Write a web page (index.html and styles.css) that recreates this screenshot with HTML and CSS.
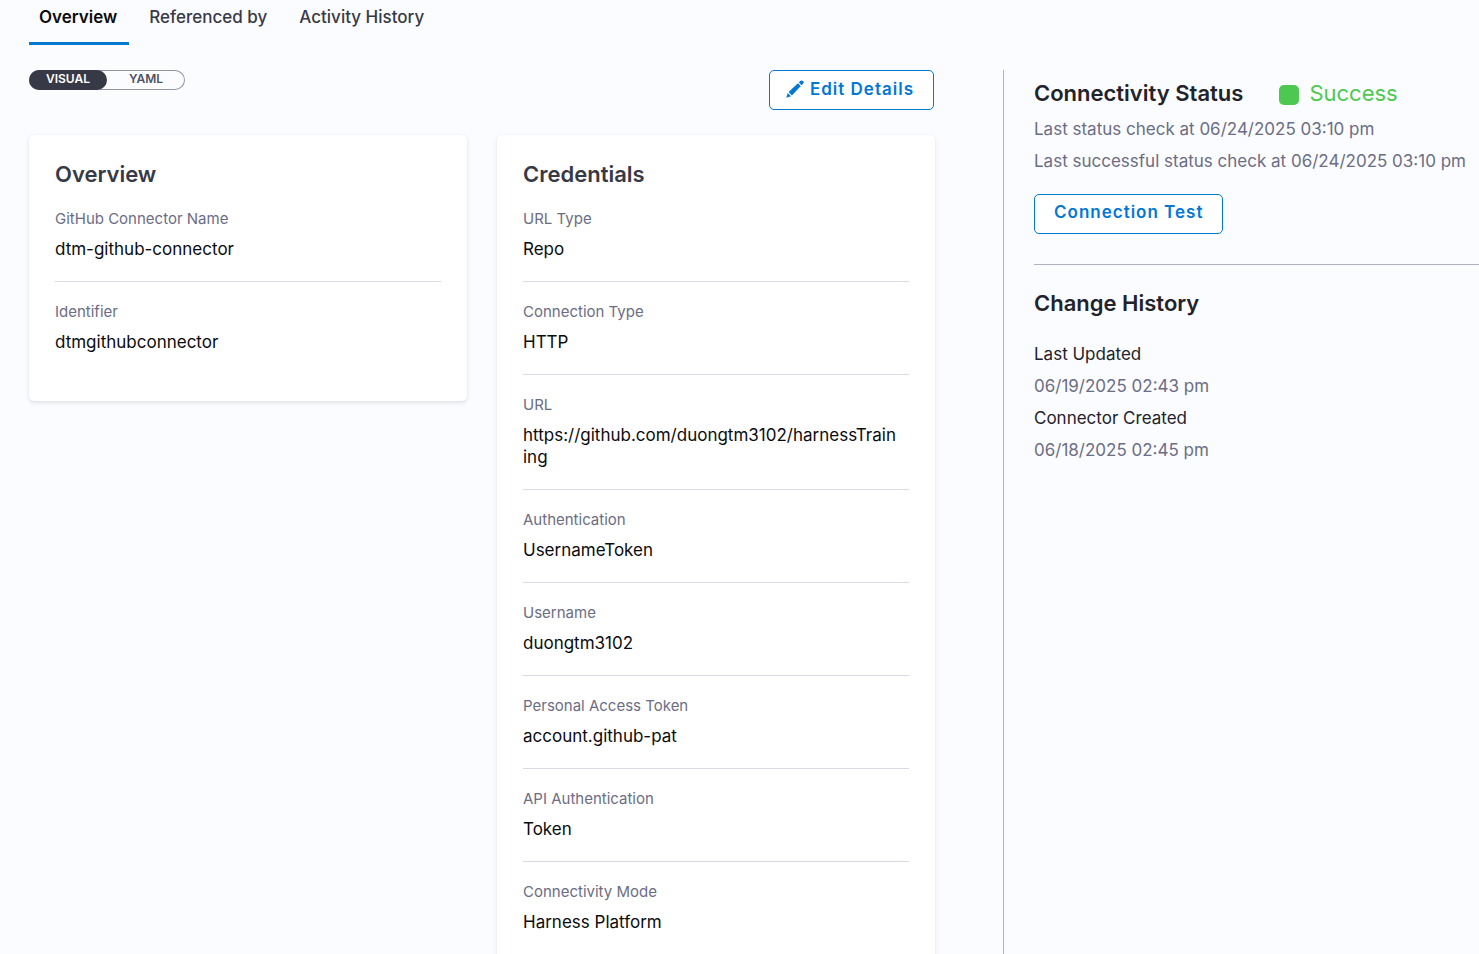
FILE: index.html
```html
<!DOCTYPE html>
<html lang="en">
<head>
<meta charset="utf-8">
<meta name="viewport" content="width=device-width, initial-scale=1">
<title>dtm-github-connector</title>
<link rel="stylesheet" href="styles.css">
</head>
<body>
<nav class="tabs">
  <a class="tab tab-active" href="#overview">Overview</a>
  <a class="tab" href="#references">Referenced by</a>
  <a class="tab" href="#activity">Activity History</a>
</nav>
<div class="page">
  <main class="main">
    <div class="toolbar">
      <div class="toggle">
        <button class="toggle-option toggle-on" type="button">VISUAL</button>
        <button class="toggle-option" type="button">YAML</button>
      </div>
      <button class="button" type="button">
        <svg class="pencil" viewBox="0 0 18 18" aria-hidden="true"><path d="M0.3 17.7 1.7 13 5 16.3zM2.6 12.1 11.9 3.2 14.8 6.1 5.9 15.4zM12.8 2.4 14.2 1Q15.6-.1 17 1T17 3.8L15.6 5.2z"/></svg>
        <span>Edit Details</span>
      </button>
    </div>
    <div class="cards">
      <section class="card">
        <h2 class="card-title">Overview</h2>
        <dl class="fields">
          <div class="field"><dt>GitHub Connector Name</dt><dd>dtm-github-connector</dd></div>
          <div class="field"><dt>Identifier</dt><dd>dtmgithubconnector</dd></div>
        </dl>
      </section>
      <section class="card">
        <h2 class="card-title">Credentials</h2>
        <dl class="fields">
          <div class="field"><dt>URL Type</dt><dd>Repo</dd></div>
          <div class="field"><dt>Connection Type</dt><dd>HTTP</dd></div>
          <div class="field"><dt>URL</dt><dd>https://github.com/duongtm3102/harnessTrain<wbr>ing</dd></div>
          <div class="field"><dt>Authentication</dt><dd>UsernameToken</dd></div>
          <div class="field"><dt>Username</dt><dd>duongtm3102</dd></div>
          <div class="field"><dt>Personal Access Token</dt><dd>account.github-pat</dd></div>
          <div class="field"><dt>API Authentication</dt><dd>Token</dd></div>
          <div class="field"><dt>Connectivity Mode</dt><dd>Harness Platform</dd></div>
        </dl>
      </section>
    </div>
  </main>
  <aside class="side">
    <section class="status">
      <div class="status-head">
        <h2 class="side-title">Connectivity Status</h2>
        <span class="status-value"><i class="status-dot"></i>Success</span>
      </div>
      <p class="muted">Last status check at 06/24/2025 03:10 pm</p>
      <p class="muted">Last successful status check at 06/24/2025 03:10 pm</p>
      <button class="button test-button" type="button">Connection Test</button>
    </section>
    <section class="history">
      <h2 class="side-title">Change History</h2>
      <dl class="changes">
        <dt>Last Updated</dt><dd class="muted">06/19/2025 02:43 pm</dd>
        <dt>Connector Created</dt><dd class="muted">06/18/2025 02:45 pm</dd>
      </dl>
    </section>
  </aside>
</div>
</body>
</html>
```

FILE: styles.css
```css
* { box-sizing: border-box; }
body {
  margin: 0;
  height: 100vh;
  overflow: hidden;
  display: flex;
  flex-direction: column;
  background: #fbfcff;
  color: #22222a;
  font-family: Inter, "Liberation Sans", sans-serif;
  font-size: 17px;
}
h2, p, dl, dd { margin: 0; }
button { font-family: inherit; cursor: pointer; }

.tabs { flex: none; display: flex; gap: 10px; padding-left: 29px; }
.tab {
  padding: 6px 12px 14px 10px;
  border-bottom: 3px solid transparent;
  color: #383946;
  font-weight: 500;
  line-height: 22px;
  text-decoration: none;
}
.tab-active {
  color: #0b0b0d;
  font-weight: 600;
  border-color: #0278d5;
  border-radius: 2px 2px 0 0;
}

.page { flex: 1; min-height: 0; display: flex; padding-top: 25px; }
.main { flex: 1; min-width: 0; padding: 0 68px 0 29px; }
.toolbar { display: flex; justify-content: space-between; align-items: flex-start; padding-right: 1px; }
.toggle {
  display: flex;
  height: 20px;
  border-radius: 10px;
  box-shadow: inset 0 0 0 1px #9293ab;
}
.toggle-option {
  width: 78px;
  padding: 0 0 3px;
  border: 0;
  border-radius: 10px;
  background: transparent;
  color: #4f5162;
  font-size: 12px;
  font-weight: 600;
  line-height: 16px;
}
.toggle-on { background: #383946; color: #fff; }

.button {
  display: flex;
  align-items: center;
  justify-content: center;
  gap: 6px;
  height: 40px;
  padding: 0 19px 2px 16px;
  border: 1px solid #0278d5;
  border-radius: 5px;
  background: #fff;
  color: #0278d5;
  font-size: 17px;
  font-weight: 600;
  line-height: 22px;
  letter-spacing: 1px;
}
.pencil { width: 18px; height: 18px; fill: currentColor; }

.cards {
  display: grid;
  grid-template-columns: repeat(2, minmax(0, 1fr));
  gap: 30px;
  align-items: start;
  margin-top: 25px;
}
.card {
  padding: 25px 26px 27px;
  border-radius: 5px;
  background: #fff;
  box-shadow: 0 0 1px rgba(40, 41, 61, .08), 0 2px 4px rgba(96, 97, 112, .16);
}
.card-title { color: #383946; font-size: 22px; font-weight: 600; line-height: 29px; }
.field { padding: 21px 0; border-bottom: 1px solid #d9dae5; }
.field:last-child { border: 0; }
.field dt { margin-bottom: 10px; color: #6b6d85; font-size: 15px; line-height: 18px; }
.field dd { color: #0b0b0d; line-height: 22px; overflow-wrap: anywhere; }

.side {
  flex: 0 0 476px;
  padding-left: 30px;
  border-left: 1px solid #b0b1c4;
  white-space: nowrap;
}
.side-title { font-size: 22px; font-weight: 600; line-height: 28px; }
.status { padding: 9px 0 30px; border-bottom: 1px solid #b0b1c4; }
.status-head { display: flex; gap: 36px; margin-bottom: 6px; }
.status-value { display: flex; align-items: center; gap: 10px; color: #4dc952; font-size: 22px; line-height: 28px; }
.status-dot { width: 20px; height: 20px; margin-top: 4px; border-radius: 5px; background: #4dc952; }
.muted { color: #6b6d85; line-height: 32px; }
.test-button { margin-top: 17px; padding: 0 19px 4px; }
.history { padding-top: 24px; }
.changes { margin-top: 21px; line-height: 32px; }
```
